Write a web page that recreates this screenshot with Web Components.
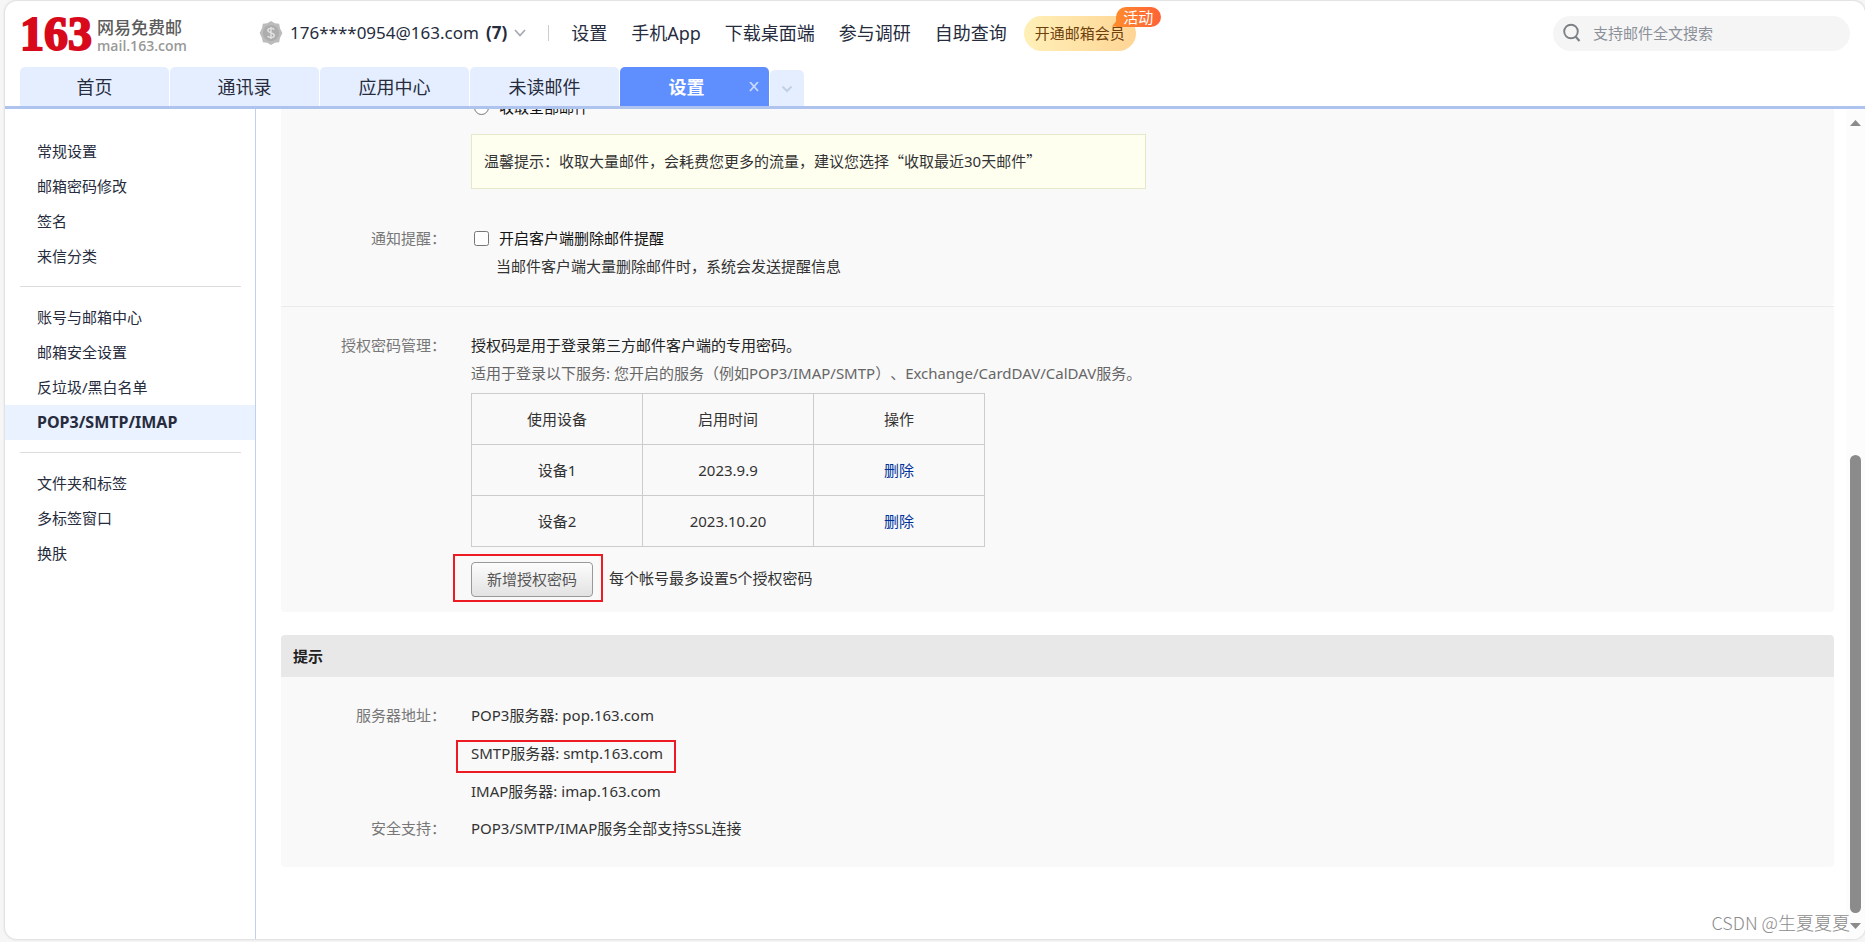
<!DOCTYPE html>
<html lang="zh-CN">
<head>
<meta charset="utf-8">
<title>网易免费邮 - 设置</title>
<style>
html, body { margin: 0; height: 100%; }
body {
  background: #f6f6f6; color: #333;
  font: 15px/20px "Noto Sans", "Noto Sans CJK SC", sans-serif;
  text-spacing-trim: space-all;
}
</style>
</head>
<body>
<mail-app></mail-app>

<template id="mail-app">
  <style>
    :host { display: block; height: 100vh; box-sizing: border-box; padding: 1px 0 3px 5px; }
    .window { height: 100%; display: flex; flex-direction: column; background: #fff; border-radius: 12px; overflow: hidden; box-shadow: 0 0 2px 1px #dcdcdc; }
    .body { flex: 1; min-height: 0; display: flex; }
    settings-page { flex: 1; min-width: 0; }
    .mark { position: absolute; right: 15px; bottom: 8px; color: #8c8c8c; font: 300 18px/24px "Noto Sans CJK SC", sans-serif; }
  </style>
  <div class="window">
    <mail-header></mail-header>
    <mail-tabs></mail-tabs>
    <div class="body">
      <settings-nav></settings-nav>
      <settings-page></settings-page>
      <scroll-rail></scroll-rail>
    </div>
  </div>
  <div class="mark">CSDN @生夏夏夏</div>
</template>

<template id="mail-header">
  <style>
    :host { display: flex; align-items: center; height: 66px; box-sizing: border-box; padding: 0 15px 0 15px; color: #262c3d; font-size: 18px; }
    a { color: inherit; text-decoration: none; white-space: nowrap; }
    .logo { display: flex; align-items: center; gap: 5px; width: 239px; }
    .num { color: #d8091b; font: 700 48px/52px "Liberation Serif", serif; -webkit-text-stroke: 2px #d8091b; }
    .name { display: grid; padding-top: 4px; color: #5c5c5c; font: 500 17px/20px "Noto Sans CJK SC", sans-serif; }
    .name small { color: #999; font: 600 14px/18px "Open Sans", sans-serif; }
    .account { display: flex; align-items: center; gap: 7px; font-size: 17px; }
    .account svg { display: block; }
    .account b { font-weight: 700; }
    .sep { width: 1px; height: 16px; background: #ccced4; margin: 0 22px; }
    nav { display: flex; gap: 24px; }
    .vip { position: relative; margin-left: 17px; padding: 0 11px; border-radius: 18px; background: linear-gradient(90deg, #fff0b8, #ffd595); color: #6f3f0c; font-size: 15px; line-height: 35px; }
    .badge { position: absolute; right: -25px; top: -9px; width: 45px; height: 20px; border-radius: 10px 10px 10px 0; background: linear-gradient(90deg, #ff8a2c, #ff6237); color: #fff; text-align: center; line-height: 20px; }
    .badge::before { content: ""; position: absolute; left: -4px; bottom: 0; width: 5px; height: 6px; background: #ff8a2c; clip-path: polygon(100% 0, 100% 100%, 0 100%); }
    .account, nav, .vip, .search, .sep { margin-bottom: 2px; }
    .search { margin-left: auto; display: flex; align-items: center; gap: 12px; width: 297px; height: 35px; box-sizing: border-box; padding: 0 10px; border-radius: 18px; background: #f5f5f5; }
    .search input { flex: 1; min-width: 0; border: 0; padding: 0; background: none; outline: 0; font: inherit; font-size: 15px; color: #333; }
    .search input::placeholder { color: #8b9099; opacity: 1; }
  </style>
  <a class="logo" href="#"><span class="num">163</span><span class="name">网易免费邮<small>mail.163.com</small></span></a>
  <a class="account" href="#">
    <svg width="24" height="26" viewBox="0 0 22 24" aria-hidden="true"><path d="M11 1l3.500 2 4 .5.8 4L21.500 12l-2.200 4.500-.8 4-4 .5-3.500 2-3.500-2-4-.5-.8-4L.5 12l2.200-4.500.8-4 4-.5z" fill="#bcbcbc"/><circle cx="11" cy="12" r="7.500" fill="#adadad"/><path d="M14 8.800c-1-1.600-6-1.600-6 .7 0 2.800 6 1.800 6 4.800 0 2.300-5 2.300-6.200.5M11 6.500v11" fill="none" stroke="#e2e2e2" stroke-width="1.300"/></svg>
    <span>176****0954@163.com</span><b>(7)</b>
    <svg width="12" height="8" viewBox="0 0 12 8" aria-hidden="true"><path d="M1 1l5 5.500L11 1" fill="none" stroke="#a8abb1" stroke-width="1.800"/></svg>
  </a>
  <span class="sep"></span>
  <nav><a href="#">设置</a><a href="#">手机App</a><a href="#">下载桌面端</a><a href="#">参与调研</a><a href="#">自助查询</a></nav>
  <a class="vip" href="#">开通邮箱会员<span class="badge">活动</span></a>
  <label class="search">
    <svg width="18" height="20" viewBox="0 0 18 20" aria-hidden="true"><circle cx="8" cy="8.500" r="6.800" fill="none" stroke="#7d8185" stroke-width="1.900"/><path d="M12.500 13.500l4 4.500" stroke="#7d8185" stroke-width="2.200"/></svg>
    <input type="text" placeholder="支持邮件全文搜索" aria-label="支持邮件全文搜索">
  </label>
</template>

<template id="mail-tabs">
  <style>
    :host { display: flex; align-items: flex-end; gap: 1px; padding: 0 15px; border-bottom: 3px solid #aec4ee; }
    button { border: 0; padding: 0; font: inherit; cursor: pointer; }
    .more { width: 34px; height: 36px; border-radius: 5px 5px 0 0; background: #e5eeff; }
  </style>
  <mail-tab>首页</mail-tab><mail-tab>通讯录</mail-tab><mail-tab>应用中心</mail-tab><mail-tab>未读邮件</mail-tab><mail-tab active>设置</mail-tab>
  <button class="more" aria-label="更多标签"><svg width="10" height="8" viewBox="0 0 10 8"><path d="M.5.5L5 5 9.500.5" fill="none" stroke="#c3cfe3" stroke-width="2"/></svg></button>
</template>

<template id="mail-tab">
  <style>
    :host { display: flex; align-items: center; width: 149px; height: 39px; box-sizing: border-box; border-radius: 5px 5px 0 0; background: #e5eeff; color: #262c3d; font-size: 18px; }
    :host([active]) { background: #5f8fff; color: #fff; font-weight: 700; padding-right: 10px; }
    button { border: 0; background: none; padding: 0; font: inherit; color: inherit; cursor: pointer; }
    .label { flex: 1; height: 100%; }
    .close { display: none; width: 10px; height: 12px; line-height: 0; }
    :host([active]) .label { padding-left: 4px; }
    :host([active]) .close { display: block; }
  </style>
  <button class="label"><slot></slot></button>
  <button class="close" aria-label="关闭"><svg width="10" height="10" viewBox="0 0 10 10"><path d="M1 0l8 9M9 0L1 9" stroke="#c8d8ff" stroke-width="1.800"/></svg></button>
</template>

<template id="settings-nav">
  <style>
    :host { display: block; width: 250px; flex: none; padding-top: 25px; border-right: 1px solid #bfd0f0; color: #262c3d; }
    hr { border: 0; height: 1px; background: #dcdcdc; margin: 12px 14px 13px 15px; }
    a { display: block; padding-left: 32px; line-height: 35px; color: inherit; text-decoration: none; }
    a.on { background: #eaf1ff; font-size: 16px; font-weight: 700; }
  </style>
  <a href="#">常规设置</a><a href="#">邮箱密码修改</a><a href="#">签名</a><a href="#">来信分类</a>
  <hr>
  <a href="#">账号与邮箱中心</a><a href="#">邮箱安全设置</a><a href="#">反垃圾/黑白名单</a><a class="on" href="#">POP3/SMTP/IMAP</a>
  <hr>
  <a href="#">文件夹和标签</a><a href="#">多标签窗口</a><a href="#">换肤</a>
</template>

<template id="form-row">
  <style>
    :host { display: flex; gap: 25px; }
    .label { width: 165px; flex: none; text-align: right; color: #777; line-height: 28px; }
    .value { flex: 1; min-width: 0; line-height: 28px; }
  </style>
  <div class="label"></div><div class="value"><slot></slot></div>
</template>

<template id="settings-page">
  <style>
    :host { display: block; overflow: hidden; padding: 0 12px 0 25px; }
    section { background: #f9f9f9; border-radius: 0 0 4px 4px; }
    .scrolled { margin-top: -16px; padding-bottom: 26px; }
    label { display: flex; align-items: center; gap: 10px; color: #111; }
    input { width: 15px; height: 15px; margin: 0 0 0 3px; }
    .notice { max-width: 649px; margin-top: 13px; border: 1px solid #e5e9c9; background: #fffff0; padding: 12px 12px 13px; }
    .full { font-family: "Noto Sans CJK SC", sans-serif; }
    .remind { margin-top: 35px; }
    .sub { padding-left: 25px; }
    .auth { border-top: 1px solid #ebebeb; border-radius: 0 0 4px 4px; padding: 24px 0 10px; }
    .dark { color: #222; }
    .dim { color: #666; }
    table { width: 514px; margin: 6px 0 7px; border-collapse: collapse; table-layout: fixed; }
    th, td { border: 1px solid #ccc; height: 50px; padding: 0; text-align: center; font-weight: 400; line-height: 20px; }
    td a { color: #003399; text-decoration: none; }
    .add { display: flex; align-items: center; gap: 6px; margin-left: -18px; }
    .frame { display: block; border: 2px solid #ed1c24; box-sizing: border-box; }
    .add .frame { width: 150px; height: 48px; padding: 6px 16px; line-height: 0; }
    .add button { width: 122px; margin-right: -10px; height: 35px; border: 1px solid #999; border-radius: 4px; background: linear-gradient(#fdfdfd, #e2e2e2); color: #555; font: inherit; line-height: 20px; padding: 0 0 2px; }
    h2 { margin: 23px 0 0; padding-left: 12px; border-radius: 4px 4px 0 0; background: #e8e8e8; color: #222; font-size: 15px; line-height: 42px; }
    .tips { display: grid; gap: 10px; padding: 24px 0 25px; }
    .servers { display: grid; gap: 10px; margin-bottom: -1px; }
    .smtp { position: relative; }
    .smtp .frame { position: absolute; left: -15px; top: 1px; width: 220px; height: 33px; }
  </style>
  <section class="scrolled">
    <form-row><label><input type="radio" name="range">收取全部邮件</label>
      <div class="notice">温馨提示：收取大量邮件，会耗费您更多的流量，建议您选择<span class="full">“</span>收取最近30天邮件<span class="full">”</span></div>
    </form-row>
    <form-row class="remind" label="通知提醒："><label><input type="checkbox">开启客户端删除邮件提醒</label><div class="sub">当邮件客户端大量删除邮件时，系统会发送提醒信息</div></form-row>
  </section>
  <section class="auth">
    <form-row label="授权密码管理：">
      <div class="dark">授权码是用于登录第三方邮件客户端的专用密码。</div>
      <div class="dim">适用于登录以下服务: 您开启的服务（例如POP3/IMAP/SMTP）、Exchange/CardDAV/CalDAV服务。</div>
      <table>
        <thead><tr><th>使用设备</th><th>启用时间</th><th>操作</th></tr></thead>
        <tbody><tr><td>设备1</td><td>2023.9.9</td><td><a href="#">删除</a></td></tr>
        <tr><td>设备2</td><td>2023.10.20</td><td><a href="#">删除</a></td></tr></tbody>
      </table>
      <div class="add"><span class="frame"><button>新增授权密码</button></span><span>每个帐号最多设置5个授权密码</span></div>
    </form-row>
  </section>
  <h2>提示</h2>
  <section class="tips">
    <form-row label="服务器地址："><div class="servers"><div>POP3服务器: pop.163.com</div><div class="smtp">SMTP服务器: smtp.163.com<span class="frame"></span></div><div>IMAP服务器: imap.163.com</div></div></form-row>
    <form-row label="安全支持：">POP3/SMTP/IMAP服务全部支持SSL连接</form-row>
  </section>
</template>

<template id="scroll-rail">
  <style>
    :host { display: flex; flex-direction: column; align-items: center; width: 19px; flex: none; box-sizing: border-box; background: #fcfcfc; padding: 11px 0 10px; }
    .space { flex: 329; }
    .thumb { flex: 457; width: 11px; border-radius: 6px; background: #8b8b8b; }
    svg { display: block; }
    .down { margin-top: 10px; }
  </style>
  <svg width="11" height="6" viewBox="0 0 11 6"><path d="M0 6L5.500 0 11 6z" fill="#8b8b8b"/></svg>
  <div class="space"></div><div class="thumb"></div>
  <svg class="down" width="11" height="6" viewBox="0 0 11 6"><path d="M0 0h11L5.500 6z" fill="#8b8b8b"/></svg>
</template>

<script>
class TemplateElement extends HTMLElement {
  constructor() {
    super();
    const template = document.getElementById(this.localName);
    this.attachShadow({ mode: "open" }).append(document.importNode(template.content, true));
  }
}
class FormRow extends TemplateElement {
  connectedCallback() {
    this.shadowRoot.querySelector(".label").textContent = this.getAttribute("label") || "";
  }
}
customElements.define("form-row", FormRow);
for (const name of ["mail-tab", "mail-tabs", "mail-header", "settings-nav", "settings-page", "scroll-rail", "mail-app"]) {
  customElements.define(name, class extends TemplateElement {});
}
</script>
</body>
</html>
